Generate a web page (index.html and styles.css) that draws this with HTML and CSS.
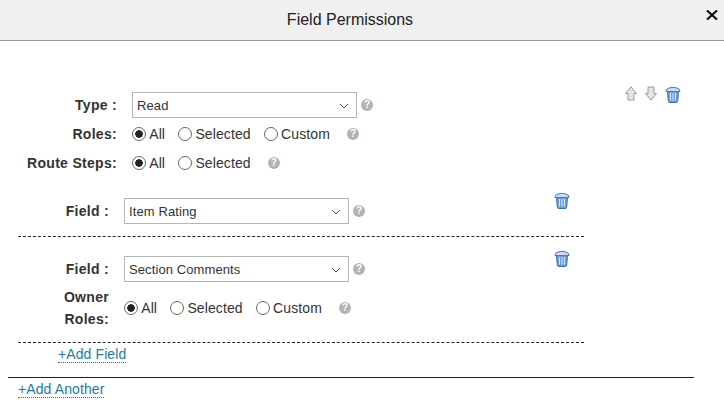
FILE: index.html
```html
<!DOCTYPE html>
<html lang="en">
  <head>
    <meta charset="UTF-8" />
    <title>Field Permissions</title>
    <link rel="stylesheet" href="styles.css">
  </head>
  <body>
    <svg class="u-hidden" aria-hidden="true">
      <symbol id="trash" viewBox="0 0 16 17">
        <path d="M2.500 5h11l-.8 10.200q-.1 1.300-1.400 1.300H4.700q-1.300 0-1.400-1.300z" fill="#6f9fd8" stroke="#3a6ea8" />
        <path d="M5.500 7v7.500M8 7v7.500M10.500 7v7.500" stroke="#dbe8f8" fill="none" />
        <path d="M1 5.500q0-3 3-3.500 4-1.500 8 0 3 .5 3 3.500z" fill="#cddcee" stroke="#4d7aae" />
      </symbol>
      <symbol id="arrow-up" viewBox="0 0 12 15">
        <path d="M6 .8l5.500 6.700H9V14H3V7.500H.5z" fill="#e6e6e6" stroke="#9a9a9a" />
      </symbol>
      <symbol id="arrow-down" viewBox="0 0 12 15">
        <path d="M6 14.200l5.500-6.700H9V1H3v6.500H.5z" fill="#e6e6e6" stroke="#9a9a9a" />
      </symbol>
      <symbol id="chevron" viewBox="0 0 10 6">
        <path d="M1 1l4 4 4-4" fill="none" stroke="#555" />
      </symbol>
    </svg>

    <header class="c-header">
      <h1 class="c-header__title">Field Permissions</h1>
      <svg class="c-header__close" viewBox="0 0 12 10"><path d="M1 0.500l10 9M11 0.500l-10 9" /></svg>
    </header>

    <main class="l-content">
      <section class="c-perm">
        <div class="c-row">
          <span class="c-label">Type :</span>
          <span class="c-select"><select><option>Read</option></select><svg><use href="#chevron" /></svg></span>
          <span class="c-help">?</span>
          <span class="c-tools">
            <svg class="c-tools__arrow"><use href="#arrow-up" /></svg>
            <svg class="c-tools__arrow"><use href="#arrow-down" /></svg>
            <svg class="c-trash"><use href="#trash" /></svg>
          </span>
        </div>
        <div class="c-row c-row--radio">
          <span class="c-label">Roles:</span>
          <label class="c-radio"><input type="radio" name="roles" checked />All</label>
          <label class="c-radio"><input type="radio" name="roles" />Selected</label>
          <label class="c-radio"><input type="radio" name="roles" />Custom</label>
          <span class="c-help">?</span>
        </div>
        <div class="c-row c-row--radio">
          <span class="c-label">Route Steps:</span>
          <label class="c-radio"><input type="radio" name="steps" checked />All</label>
          <label class="c-radio"><input type="radio" name="steps" />Selected</label>
          <span class="c-help">?</span>
        </div>
      </section>

      <section class="c-fields">
        <div class="c-field">
          <div class="c-row">
            <span class="c-label c-label--field">Field :</span>
            <span class="c-select"><select><option>Item Rating</option></select><svg><use href="#chevron" /></svg></span>
            <span class="c-help">?</span>
            <svg class="c-trash c-trash--field"><use href="#trash" /></svg>
          </div>
        </div>
        <div class="c-field c-field--last">
          <div class="c-row">
            <span class="c-label c-label--field">Field :</span>
            <span class="c-select"><select><option>Section Comments</option></select><svg><use href="#chevron" /></svg></span>
            <span class="c-help">?</span>
            <svg class="c-trash c-trash--field"><use href="#trash" /></svg>
          </div>
          <div class="c-row c-row--owner">
            <span class="c-label c-label--field">Owner Roles:</span>
            <label class="c-radio"><input type="radio" name="owner" checked />All</label>
            <label class="c-radio"><input type="radio" name="owner" />Selected</label>
            <label class="c-radio"><input type="radio" name="owner" />Custom</label>
            <span class="c-help">?</span>
          </div>
        </div>
        <a class="c-link c-link--field" href="#">+Add Field</a>
      </section>

      <footer class="c-footer">
        <a class="c-link" href="#">+Add Another</a>
      </footer>
    </main>
  </body>
</html>
```

FILE: styles.css
```css
:root {
  --text: #333333;
  --line: #999999;
  --link: #1f7a9c;
  --help: #b3b3b3;
}

html {
  background: #ffffff;
  color: var(--text);
}

body {
  margin: 0;
  font-family: "Liberation Sans", Arial, sans-serif;
  font-size: 14px;
  overflow: hidden;
}

.u-hidden {
  display: none;
}

.c-header {
  display: flex;
  align-items: center;
  justify-content: center;
  height: 40px;
  padding-right: 24px;
  background: #f0f0f0;
  border-bottom: 1px solid var(--line);
}

.c-header__title {
  margin: 0;
  font-size: 16px;
  font-weight: 400;
  color: #222222;
}

.c-header__close {
  position: absolute;
  top: 10px;
  right: 6px;
  width: 12px;
  height: 10px;
  fill: none;
  stroke: #111111;
  stroke-width: 2.200;
}

.l-content {
  padding: 51px 0 0 8px;
}

.c-row {
  display: flex;
  align-items: center;
}

.c-row--radio {
  height: 26px;
  margin-top: 3px;
}

.c-row--owner {
  margin-top: 4px;
}

.c-row--owner .c-label {
  line-height: 22px;
}

.c-label {
  width: 109px;
  margin-right: 15px;
  font-weight: 700;
  letter-spacing: 0.3px;
  text-align: right;
}

.c-label--field {
  width: 91px;
}

.c-select {
  display: block;
  position: relative;
  width: 225px;
  height: 26px;
}

.c-select select {
  display: block;
  width: 100%;
  height: 100%;
  padding: 0 0 0 4px;
  appearance: none;
  background: #ffffff;
  border: 1px solid #b5b5b5;
  border-radius: 0;
  color: var(--text);
  font-family: inherit;
  font-size: 13px;
  letter-spacing: 0.1px;
}

.c-select svg {
  position: absolute;
  top: 11px;
  right: 8px;
  width: 10px;
  height: 6px;
}

.c-help {
  display: block;
  width: 12px;
  height: 12px;
  margin-left: 4px;
  border-radius: 50%;
  background: var(--help);
  color: #ffffff;
  font-size: 10px;
  font-weight: 700;
  line-height: 12px;
  text-align: center;
}

.c-radio {
  display: flex;
  align-items: center;
  margin-right: 13.200px;
  letter-spacing: 0.1px;
}

.c-radio input {
  width: 14px;
  height: 14px;
  margin: 0 3.200px 0 0;
  appearance: none;
  border: 1px solid #666666;
  border-radius: 50%;
  background: #ffffff;
}

.c-radio input:checked {
  background: radial-gradient(circle, #222222 0 3.500px, #ffffff 4px);
}

.c-tools {
  display: flex;
  align-self: flex-start;
  gap: 8px;
  margin: -6px 0 0 252px;
}

.c-tools__arrow {
  width: 12px;
  height: 15px;
}

.c-trash {
  width: 16px;
  height: 17px;
}

.c-trash--field {
  align-self: flex-start;
  margin: -6px 0 0 189px;
}

.c-fields {
  width: 566px;
  margin: 22px 0 0 10px;
}

.c-field {
  padding-bottom: 12px;
  margin-bottom: 19px;
  border-bottom: 1px dashed #222222;
}

.c-field--last {
  margin-bottom: 0;
}

.c-link {
  display: inline-block;
  border-bottom: 1px dotted var(--link);
  color: var(--link);
  letter-spacing: 0.1px;
  line-height: 15px;
  text-decoration: none;
}

.c-link--field {
  margin: 4px 0 0 40px;
}

.c-footer {
  width: 676px;
  margin: 14px 0 0;
  padding: 3px 0 0 10px;
  border-top: 1px solid #222222;
}
```
